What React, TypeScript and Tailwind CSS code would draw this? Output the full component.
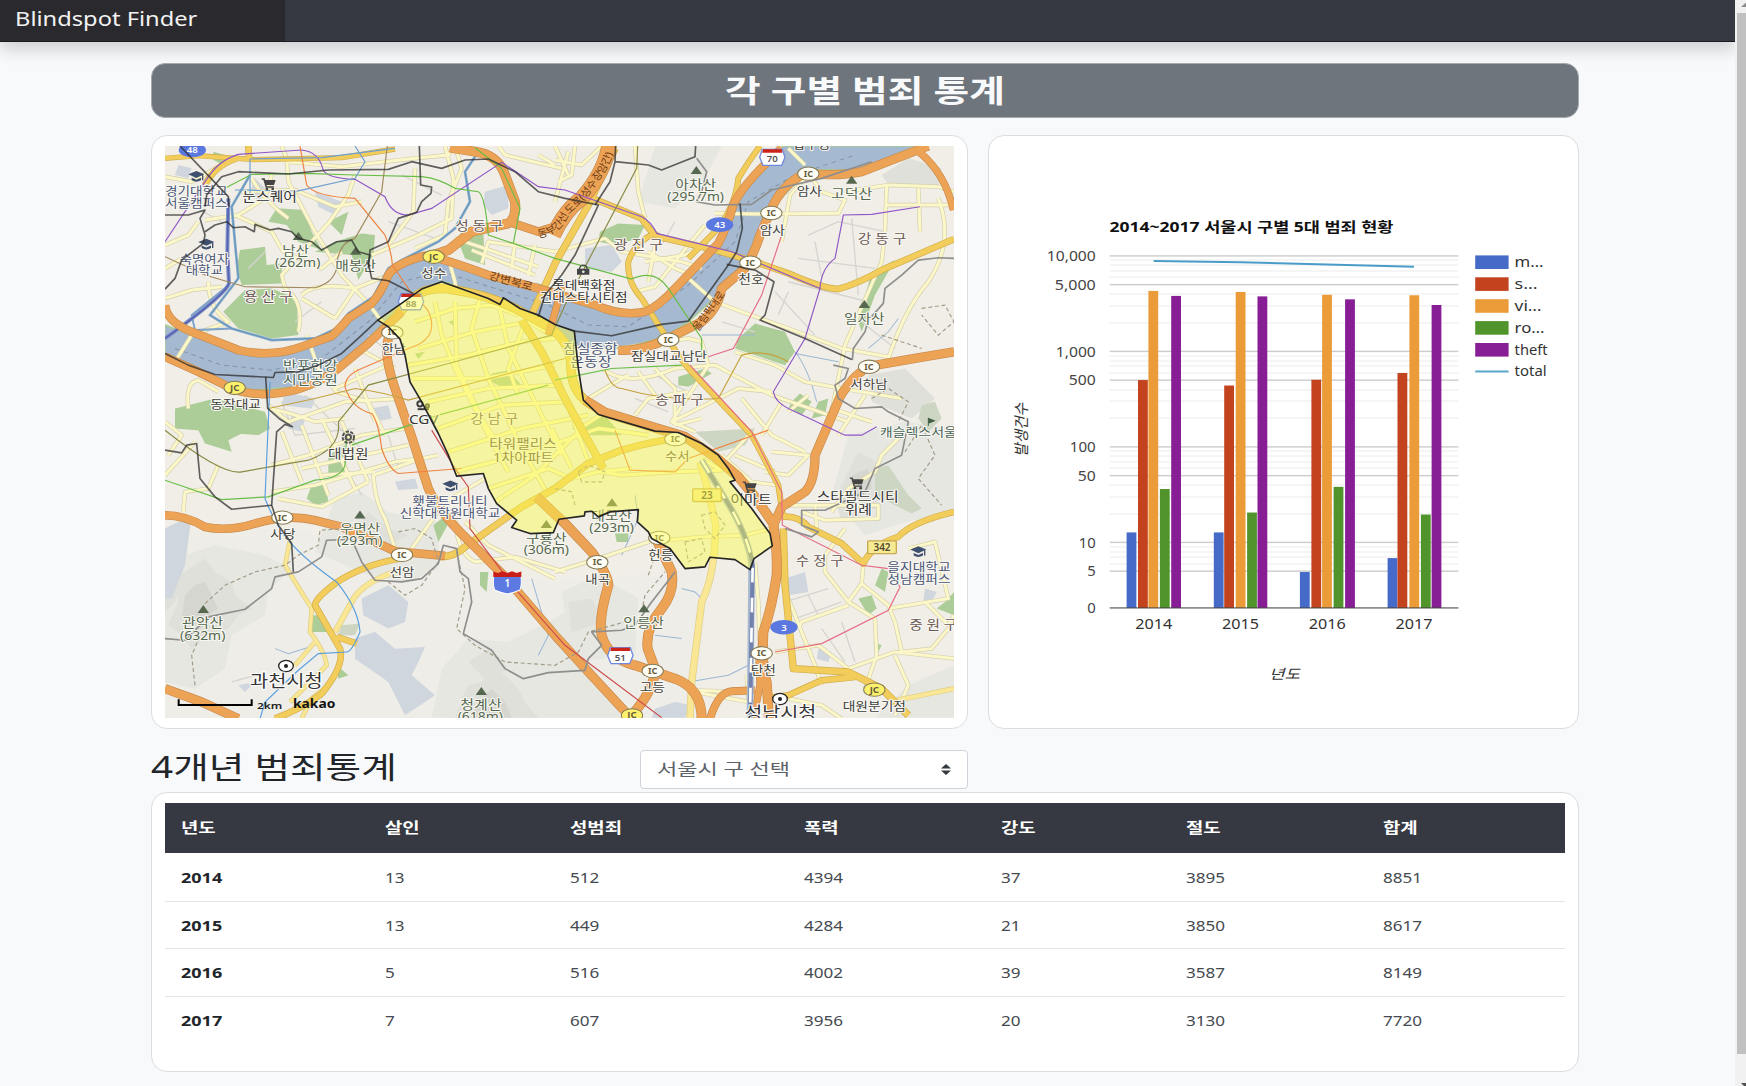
import React from "react";

const FONT = "font-['Noto_Sans','Noto_Sans_CJK_KR',sans-serif]";

type Pts = string;

const ORANGE: [Pts, number][] = [
  ["M30 510 Q35 560 110 590 L250 645 Q350 668 440 635 L530 603 Q560 575 580 550 L650 505 Q680 470 700 420 Q720 385 810 362 Q850 365 1000 420 L1150 460 L1320 510 Q1400 545 1470 530 Q1510 515 1560 460 L1690 325 Q1715 280 1735 210 Q1760 150 1880 40", 22],
  ["M30 665 L130 710 L240 765 Q330 790 430 762 Q500 740 550 700 L640 625 L740 530", 22],
  ["M1390 645 Q1450 650 1530 615 L1640 560 Q1690 520 1700 460 L1770 400 Q1800 350 1815 300 L1850 220 Q1880 150 1950 115 Q2050 125 2120 110 L2280 48 L2320 33", 24],
  ["M1290 795 L1350 832 L1500 878 L1590 905 L1680 965 L1750 1025 L1800 1085 L1855 1165 Q1868 1250 1865 1320 Q1850 1420 1825 1490 Q1820 1600 1835 1640 L1842 1750", 26],
  ["M1812 1560 L1815 1650 L1795 1750", 18],
  ["M700 610 Q685 660 720 760 L770 905 L820 1060 Q850 1130 950 1225 L1050 1325 L1200 1500 L1300 1610 L1430 1750", 24],
  ["M30 1140 Q90 1140 150 1175 Q220 1190 300 1165 Q400 1135 480 1155 L560 1175 L650 1215 L720 1248 L870 1262", 22],
  ["M885 38 L960 50 Q1030 60 1050 120 L1080 200 Q1085 250 1060 265 L950 290 L880 345 L820 365", 26],
  ["M1075 265 L1150 290 L1215 270", 22],
  ["M1195 300 Q1230 225 1280 190 Q1350 110 1362 30", 42],
  ["M2397 650 L2280 670 L2150 692 Q2100 710 2055 785 L2010 890 L1980 960 Q1980 1040 1950 1070 L1880 1115 L1855 1170", 24],
  ["M1145 1085 L1230 1165 L1310 1250 Q1360 1320 1360 1350 Q1330 1450 1340 1500 Q1360 1570 1440 1590 L1560 1630 Q1640 1660 1640 1750", 26],
  ["M1505 1215 L1550 1310 Q1560 1370 1520 1420 Q1470 1480 1478 1540 L1500 1600 Q1500 1660 1430 1740", 26],
  ["M1665 1750 Q1690 1670 1730 1668 L1800 1665", 20],
  ["M2285 45 Q2370 110 2395 225", 18],
  ["M30 1660 L140 1700 L250 1750", 24],
  ["M1180 600 L1215 480 L1225 440", 18],
];

const GOLD: [Pts, number][] = [
  ["M725 540 L780 485 Q820 450 900 465 Q1000 480 1080 520 L1180 575 Q1250 620 1248 700 Q1250 780 1320 815", 24],
  ["M1300 185 L1460 250 Q1485 290 1510 305 L1680 345 L1800 380 L1900 415 Q2000 460 2050 462 Q2110 445 2180 405 L2397 312", 16],
  ["M1130 540 L1200 385 L1300 210 L1380 40", 18],
  ["M1500 295 Q1440 320 1420 380 Q1415 440 1460 490 Q1560 650 1600 700 L1790 900 L1870 1050 L1885 1150", 14],
  ["M1880 1145 Q1930 1140 1960 1175 L2060 1225 L2125 1285 Q2150 1230 2230 1205 Q2270 1160 2397 1130", 16],
  ["M1885 1180 L1890 1350 L1915 1600 L2080 1610 L2180 1660 L2260 1740", 18],
  ["M1830 1690 L1900 1680 L2000 1635 L2100 1625", 16],
  ["M735 1270 Q620 1290 540 1345 Q480 1390 480 1410 L555 1540 Q570 1590 500 1675 Q450 1715 360 1750 M545 1505 L605 1525", 16],
  ["M855 1265 Q900 1265 930 1235 L1100 1115 L1200 1060 L1300 985 L1400 945 Q1500 915 1600 905", 18],
  ["M30 70 L130 62 L300 74 L560 68 L720 42", 12],
  ["M150 150 Q180 90 250 68 M280 33 L282 70", 16],
  ["M1100 555 L1160 650 L1230 790 L1290 900 L1345 1000", 20],
  ["M1815 33 Q1780 80 1750 130 Q1740 220 1680 290 L1600 370", 14],
];

const LIGHT: [Pts, number][] = [
  ["M735 1305 Q620 1340 590 1400 L540 1490", 14],
  ["M1635 980 Q1665 1080 1682 1170 Q1680 1320 1640 1400 L1610 1640 L1605 1750", 18],
  ["M2200 1700 L2397 1660", 12],
  ["M405 1215 L390 1290 Q420 1340 470 1420 L465 1490 Q510 1550 515 1590 L405 1700 M480 1520 L420 1590 M520 1650 L470 1690 L440 1750", 10],
];

const PALE: Pts[] = [
  "M380 33 L395 70 L400 140 L480 290 L560 420 L640 505 L710 600",
  "M395 80 L560 95 L780 70 L880 60 L900 33",
  "M290 130 Q330 200 400 250 M350 120 L330 190 L250 240 L150 255",
  "M260 170 L420 165 L540 215 L620 200",
  "M600 120 L580 180 L520 265 L460 330 L380 420 L390 460",
  "M240 240 L350 290 L385 350 L500 400 L560 350",
  "M30 125 L110 140 L200 90 M30 330 L100 300 L130 260",
  "M30 490 L110 465 L200 455 M30 400 L80 370",
  "M160 440 Q160 520 220 560 L110 600 L60 680",
  "M390 460 Q450 500 430 590 M440 490 L540 550 M600 460 L540 550",
  "M440 480 Q480 440 600 460 L700 420",
  "M455 600 L490 700 L545 770 L640 800 L690 900",
  "M650 360 L790 300 L890 250 L895 130 L870 33",
  "M780 100 L775 230 L700 330",
  "M880 370 L900 440 L905 480 M980 385 L1000 320 L1200 350",
  "M1080 320 L1070 400 M1140 330 L1120 420 M900 310 L1150 395 M950 345 L1140 420",
  "M1030 33 L1050 60 L1220 100 M1150 60 L1200 90 M1200 33 L1240 120",
  "M900 33 L920 100 L880 200 L870 300 L780 340",
  "M1200 75 L1280 90 L1340 33 M1210 140 L1250 120 L1260 33",
  "M1240 50 L1200 200 M1440 33 L1450 170 L1470 250",
  "M1200 350 L1350 310 L1400 350 L1580 380 L1640 400",
  "M1480 350 L1560 400 L1610 420 M1470 380 L1590 360 L1660 320",
  "M1440 470 L1500 455 L1600 330 L1650 270 M1500 330 L1480 440",
  "M1600 430 L1680 500 L1760 530 L1900 580 L2060 640 L2200 665",
  "M1680 235 L1800 237 L2050 235 L2070 195 L2000 170 L1960 115",
  "M1900 40 L1950 90 M1880 320 L1905 180 L1950 130",
  "M2070 170 L2200 150 L2350 155 L2397 170",
  "M2195 150 L2190 290 L2180 380 L2070 630 L2020 880",
  "M2290 160 L2295 290 M2350 190 Q2400 320 2320 440 Q2250 520 2200 670",
  "M2190 210 L2380 210",
  "M1390 640 L1600 610 L1640 620 L1660 690 L1550 860 L1620 890",
  "M1340 700 Q1420 760 1560 700 L1680 690 L1850 780 L2080 860",
  "M1300 790 L1400 730 L1420 720 M1440 840 L1480 790 L1600 770",
  "M1450 710 L1500 780 M1500 700 L1560 760 L1560 870",
  "M1740 650 L1860 690 L1950 740 L2060 760 L2240 790",
  "M1550 860 L1750 760 L1850 770 M1640 850 L1560 870",
  "M1760 790 L1850 900 L1950 950 M1820 900 L1880 800 M1900 830 L1960 780",
  "M1850 950 L1960 960 L1900 1020 L1830 1010 M1690 1000 L1790 890",
  "M1700 960 L1790 1040 L1870 1050 M1740 960 L1860 1010",
  "M2060 770 L2030 820 L2150 860 M2130 780 L2050 900",
  "M2240 900 L2180 960 L2160 1010 L2080 1060 L2030 1130",
  "M1900 1110 L2170 1110 L2170 1150 L2010 1155 L1940 1130 M1980 1110 L1985 1180",
  "M2070 1180 L2010 1260 L2010 1310 L2080 1400 L2160 1450 L2165 1560 L2130 1660",
  "M2080 1410 L1940 1460 L1930 1480 M1900 1390 L1980 1590 L2000 1650",
  "M2125 1290 L2120 1345 L2080 1400 M2120 1345 L2200 1410 L2220 1460",
  "M2200 1420 L2380 1390 L2340 1220 L2260 1240 M2310 1400 L2380 1470 L2397 1440",
  "M2220 1460 L2240 1550 L2330 1540 L2380 1480 M2220 1560 L2260 1650 L2220 1740",
  "M1860 1550 L1990 1530 L2080 1600 L2220 1550 L2397 1570",
  "M1900 1690 L2000 1710 L2060 1750",
  "M1200 1310 L1330 1270 L1480 1220 L1640 1205 L1770 1200 L1850 1180",
  "M1800 1280 L1810 1400 L1815 1560 M1775 1620 L1780 1700 L1620 1670",
  "M1620 1665 L1750 1670",
  "M190 990 L160 1060 L90 1070 L85 1130",
  "M30 860 L80 900 L40 960 M30 1020 L120 920",
  "M340 810 L400 860 L570 800 L740 790",
  "M340 820 Q400 830 480 860 L570 850",
  "M380 890 L440 1040 M440 870 L520 1080 M500 850 L600 1060 M560 860 L640 1040",
  "M350 990 L460 960 L620 900 L750 880 M350 1070 L480 1050 L720 980 L800 970",
  "M100 820 Q90 740 130 735 L190 770",
  "M655 1020 Q660 1100 690 1150 L720 1240 M655 1020 L800 970 L850 960",
  "M500 1020 L660 1010 M440 1000 L760 930",
  "M370 1090 L500 1115 L640 1040",
  "M770 1240 L870 1100 L990 1030 M900 1130 Q900 1250 960 1280 L1080 1265 L1230 1310",
  "M930 1160 L1000 1230 L1200 1330",
  "M610 640 L720 700 M540 760 L700 690 M600 700 L660 860",
];

const DISTRICT_ROADS: Pts[] = [
  "M780 560 L900 520 L1010 510 L1090 540",
  "M790 640 L960 590 L1120 560 L1190 600",
  "M760 690 L940 660 L1100 620 L1200 610",
  "M770 730 L990 730 L1200 690",
  "M820 800 L1000 760 L1210 750",
  "M850 880 L1040 810 L1230 800",
  "M880 950 L1100 880 L1300 840",
  "M900 1010 L1130 950 L1330 880 L1480 900",
  "M840 500 L860 600 L900 700 L950 800 L1010 920 L1060 1010",
  "M900 500 L905 690 L980 850 L1050 960",
  "M975 490 L950 580 L1000 730 L1100 940 L1180 1080",
  "M1030 500 L1060 640 L1140 800 L1220 960",
  "M1110 560 L1060 700 L1090 780",
  "M1000 1060 L1180 1000 L1250 1030 L1330 1010 L1430 1000",
  "M1020 1100 L1140 1020 L1290 870 L1350 830",
  "M1190 880 L1250 1000 M1210 730 L1300 980",
  "M1560 1010 L1700 1005 L1640 970 M1340 1010 L1400 1020 L1560 1010",
];

const MINOR: Pts[] = [
  "M1960 300 L2050 260 L2190 290 M1930 370 L2160 400 M1900 440 L2140 500 M2090 250 L2110 480 M1980 320 L2000 430 M1870 540 L1900 470",
  "M1890 1400 L2020 1360 M1920 1450 L2060 1400 M1960 1380 L1990 1440 M2000 1480 L2070 1580 M2060 1460 L2100 1580",
  "M1700 560 L1800 590 M1520 330 L1560 260 M90 200 L200 260 M420 560 L500 500",
  "M280 400 L330 350 M640 600 L700 650 M560 980 L620 1080 M700 900 L730 1000 M230 1640 L300 1620",
  "M380 800 L420 900 L600 880 M450 780 L640 960 M1440 790 L1540 830 M1500 720 L1640 790",
  "M2120 560 L2220 640 M1860 470 L1980 600 M740 120 L860 180 M700 260 L840 310",
];

const PARKS: Pts[] = [
  "M255 345 L330 335 L335 390 L380 385 L380 445 L260 450 L245 400 Z",
  "M205 530 L270 465 L350 460 L425 490 L430 600 L350 610 L250 580 Z",
  "M365 220 L450 225 L470 290 L500 345 L430 320 L395 270 L340 260 Z",
  "M480 350 L540 320 L620 295 L660 300 L655 360 L610 435 L590 360 Z",
  "M520 260 L580 230 L560 300 Z",
  "M920 285 L985 290 L990 390 L930 370 L910 320 Z",
  "M1335 290 L1390 265 L1470 270 L1450 310 L1380 330 L1330 320 Z",
  "M1750 610 L1800 565 L1890 590 L1920 650 L1890 690 L1740 640 Z",
  "M2110 560 L2150 410 L2220 375 L2160 480 L2120 590 Z",
  "M60 820 L180 790 L330 830 L345 880 L310 900 L60 880 Z M130 885 L280 885 L220 915 L230 950 L150 925 Z",
  "M470 1050 L510 1040 L520 1100 L480 1110 L455 1090 Z",
  "M520 960 L570 930 L575 1010 L520 1020 Z",
  "M1010 715 L1060 705 L1100 750 L1050 760 L1000 735 Z",
  "M1570 725 L1650 700 L1670 715 L1600 755 L1570 750 Z",
  "M1910 800 L1935 775 L1970 800 L1940 840 L1900 820 Z M1990 800 L2020 790 L2010 840 L1970 850 Z",
  "M2110 1390 L2150 1380 L2165 1420 L2140 1440 Z M2160 1350 L2180 1300 L2200 1310 L2190 1370 Z M2370 1400 L2397 1370 L2397 1440 L2345 1420 Z M2155 1520 L2180 1530 L2165 1560 Z",
  "M50 625 L110 635 L125 655 L60 645 Z M1140 440 L1200 480 L1210 470 Z",
  "M975 1310 L1000 1310 L995 1370 L975 1350 Z M545 1590 L580 1620 L550 1630 Z M470 1440 L500 1440 L520 1490 L470 1490 Z",
  "M835 1170 L860 1150 L880 1165 L850 1220 Z M175 50 L210 60 L215 95 L175 75 Z",
  "M1380 1195 L1420 1195 L1420 1220 L1385 1220 Z M1250 880 L1350 840 L1400 900 L1300 900 Z M880 560 L910 550 L900 575 Z M780 655 L810 650 L790 672 Z",
];

const MOUNTAINS: Pts[] = [
  "M30 1300 L90 1260 L180 1230 L330 1260 L410 1300 L340 1370 L330 1440 L230 1500 L210 1600 L120 1660 L30 1640 Z",
  "M540 1090 L620 1070 L700 1130 L850 1160 L850 1300 L760 1340 L640 1320 L480 1250 Z",
  "M830 1747 L860 1600 L940 1510 L1060 1520 L1180 1460 L1300 1390 L1340 1440 L1290 1560 L1400 1747 Z",
  "M1500 33 L1700 33 L1650 130 L1560 220 L1450 200 Z",
  "M2030 1080 L2080 900 L2250 860 L2397 880 L2397 1130 L2250 1160 L2130 1200 Z",
  "M2160 1747 L2260 1650 L2397 1590 L2397 1747 Z",
  "M1220 1370 L1330 1320 L1450 1390 L1440 1560 L1250 1580 Z",
];

const HILLS: Pts[] = [
  "M60 1330 L150 1270 L180 1310 L230 1340 L240 1380 L290 1420 L250 1440 L220 1480 L160 1500 L110 1540 L80 1500 L40 1470 L70 1400 Z",
  "M30 1340 L80 1320 L60 1400 L30 1430 Z",
  "M900 1747 L920 1690 L940 1650 L980 1640 L1010 1600 L1050 1620 L1090 1660 L1110 1700 L1150 1747 Z",
  "M940 1580 L1000 1540 L1060 1600 L1000 1640 Z",
  "M640 1130 L700 1180 L760 1200 L700 1230 L600 1190 Z",
  "M2180 120 L2260 70 L2360 100 L2350 160 L2200 150 Z",
  "M2110 950 L2200 1000 L2160 1120 L2060 1160 L2040 1090 Z",
  "M2140 720 L2250 700 L2340 790 L2270 850 L2150 800 Z",
  "M1240 1400 L1310 1390 L1350 1460 L1250 1490 Z",
];

const RIDGES: Pts[] = [
  "M90 1380 L120 1350 L150 1340 L170 1380 L190 1420 L160 1440 L140 1480 L110 1460 L80 1450 Z",
  "M950 1747 L970 1700 L1010 1660 L1050 1700 L1070 1747 Z",
  "M2090 1020 L2140 1000 L2150 1060 L2090 1110 Z",
];

const PALEBLUE: Pts[] = [
  "M620 1390 L700 1350 L760 1400 L750 1460 L700 1480 L625 1440 Z",
  "M600 1510 L660 1490 L720 1540 L810 1535 L790 1580 L770 1620 L840 1680 L750 1740 L700 1640 L600 1570 Z",
  "M30 1180 L110 1140 L90 1290 L50 1390 L30 1390 Z",
  "M990 170 L1060 150 L1060 220 L1010 240 L985 210 Z",
  "M1290 340 L1370 330 L1400 380 L1370 410 L1290 400 Z",
  "M1500 1720 L1560 1700 L1610 1710 L1590 1747 L1490 1747 Z",
  "M1890 1330 L1950 1310 L1960 1370 L1900 1380 Z M2310 1360 L2345 1370 L2330 1400 L2305 1395 Z M1990 1540 L2030 1550 L2020 1580 L1985 1570 Z",
  "M720 1040 L780 1030 L790 1060 L730 1065 Z M410 840 L450 850 L440 890 L400 880 Z M650 820 L700 810 L710 850 L660 860 Z",
  "M480 170 L560 200 L540 240 L490 215 Z M70 90 L110 100 L100 130 L60 120 Z M300 130 L330 160 L310 200 L285 170 Z",
  "M390 770 L480 790 L470 820 L380 810 Z M250 1650 L300 1640 L270 1670 Z",
];

const BORDERS: Pts[] = [
  "M75 33 L220 185 L222 215 M30 240 L100 240 L150 225 L135 250 L150 300 L145 325 L80 375 L60 430 L30 462",
  "M150 290 L180 270 L215 260 L235 278 L270 275 L298 290 L300 268 L345 285 L370 280 L410 290 L430 310 L470 320 L500 345 L545 320 L590 315 L610 350 L645 360 L640 385 L650 430 L700 437 L775 475",
  "M150 215 L155 180 L200 125 L250 110 L400 117 L520 105 L700 103 L770 80 L860 100 L930 75 L1000 72 L1080 110 L1150 170 L1230 190 L1330 210 L1260 360 L1220 420 L1170 480 L1150 545",
  "M793 33 L797 150 L830 156 L828 175 L800 200 L785 232 L730 250 L700 320 L645 345 L640 400",
  "M30 655 L100 690 L180 718 L355 727 L360 712 L430 710 L490 690 L560 655 L620 600 L668 555",
  "M332 725 L338 820 L372 850 L412 875 L390 868 L365 890 L350 1110 L370 1170 L410 1225 L415 1310",
  "M30 945 L80 953 L95 930 L125 925 L135 1030 L180 1085 L230 1122 L350 1110",
  "M1382 33 L1380 80 L1480 90 L1520 105 L1620 65 L1622 33 M1380 80 L1365 140 L1320 210",
  "M1755 205 L1762 280 L1745 350 L1720 390 L1600 558 L1520 568 L1370 602 L1258 588",
  "M1715 388 L1800 405 L1857 440 L1830 540 L1815 555 L1950 610 L2090 673",
];

const GREY_BORDERS: Pts[] = [
  "M2092 675 L2095 640 L2130 590 L2140 555 L2185 505 L2190 460 L2240 420 L2290 375 L2350 368 L2397 370",
  "M2035 690 L2080 700 L2070 730 L2040 750 L2050 790 L2100 820 L2180 815 L2200 830 L2260 860 L2240 960 L2160 1000 L2130 1070 L2010 1125 L1940 1125 L1940 1170 L1990 1190 L1970 1205 L1890 1180",
  "M30 1510 L90 1515 L160 1445 L270 1422 L350 1360 L360 1325 L430 1310 L500 1265 L515 1215 L590 1212 L620 1280 L660 1335 L740 1340 L800 1330 L850 1285 L865 1230 L905 1240 L915 1310 L940 1330 L950 1400 L925 1495 L1010 1545 L1050 1600 L1105 1630 L1180 1612 L1290 1605 L1300 1570 L1340 1530 L1310 1490 L1400 1485 L1440 1470 L1490 1400 L1560 1310",
  "M1625 70 L1655 110 L1640 170 L1625 200 L1680 210 L1790 208 L1850 165 L2000 130 L2150 80",
];

const DASHED: Pts[] = [
  "M150 1405 L210 1350 L300 1310 L390 1290 L430 1260 L490 1230 L495 1185 L560 1180",
  "M120 1650 L110 1560 L140 1490 M905 1250 L930 1360 L905 1480 L960 1530 L1050 1580 L1200 1590 L1270 1550 L1300 1490 L1410 1460",
  "M1480 1320 L1500 1260 M1460 1430 L1470 1380 L1530 1310 M730 1190 L780 1180 L830 1210 L850 1280 L800 1350 L750 1380 L700 1340",
  "M1270 1010 L1300 990 L1350 1010 L1340 1040 L1280 1040 Z M1640 1140 L1680 1130 L1710 1170 L1680 1210 L1650 1180 Z M1590 1220 L1640 1210 L1650 1250 L1600 1280 Z",
  "M2180 600 L2300 640 M2300 520 L2370 510 L2397 560 L2350 600 L2300 540",
  "M2250 950 L2300 870 L2340 960 L2290 1030 L2360 1110 M1200 1060 L1250 1070 L1260 1110",
  "M2150 790 L2200 760 L2260 800 L2230 860",
];

const SUBWAY: [Pts, string][] = [
  ["M30 320 L150 140 Q190 75 250 58 L440 45 Q490 50 503 100 Q510 130 600 133 L690 185 Q710 240 760 240 L830 220 L1040 82 L1150 155 L1230 165 L1460 245 Q1490 260 1505 295 L1730 350 L1995 460 Q1999 400 2040 370 L2065 240 L2150 238 L2295 215", "#8f56c8"],
  ["M1995 460 L1950 610 L1855 770 Q1860 800 1900 820 L2070 900 L2120 900 L2165 875", "#8f56c8"],
  ["M200 165 L290 118 L450 115 L600 120 L800 125 Q850 130 900 160 L970 170 Q990 180 1000 300 L1075 325 L1200 370 L1430 432 Q1500 400 1540 460 L1640 610 L1640 660 M1075 325 L1095 220 L1040 100 L960 38", "#68bd46"],
  ["M30 1035 L200 1093 L340 1085 L480 1035 Q560 1030 570 990 L575 900 M590 930 L850 840 L1180 750 M1200 735 L1370 700 L1580 690", "#68bd46"],
  ["M435 33 L455 150 Q480 185 600 190 L690 300 Q710 350 712 390 L780 490 Q830 520 830 570 Q830 620 760 640 L620 700 Q570 720 570 755 Q590 820 650 835 Q670 860 680 940 Q700 1000 730 1015 L920 1000 M1380 885 L1425 1005 L1560 1010 L1600 970 L1840 885", "#ee8240"],
  ["M340 820 L480 790 L600 760 Q680 770 760 795 L1230 670 M1350 705 Q1370 760 1400 760 Q1540 800 1690 790 L1760 660 Q1830 640 1900 680", "#c4a13e"],
  ["M30 365 L150 420 L270 455 L480 458 Q550 440 548 370 Q560 320 600 310 L680 170 L697 33", "#a08a5e"],
  ["M30 885 Q200 1020 260 1010 L460 975 Q560 940 550 860 L640 750 L900 680 L1190 600 L1230 510 L1445 100 L1448 33", "#8a8a45"],
  ["M1880 300 L1820 480 L1735 640 L1660 665 M1605 690 L1790 890 L1880 1070 L1882 1170 L2120 1290 L2200 1300 L2235 1355 L2200 1425 L2000 1525 L1860 1550", "#e56d86"],
  ["M830 885 L900 1000 L940 1055 L945 1180 L1080 1360 L1230 1530 L1520 1747", "#cc4b4b"],
  ["M285 180 L285 72 L500 68 L720 40 M420 170 L600 130 L630 80 L600 33 M240 165 L420 168", "#6f9fd0"],
  ["M345 740 L330 1090 Q345 1130 380 1190 Q430 1260 545 1340 Q610 1420 615 1490 Q590 1550 575 1550 L490 1555 L430 1605 L330 1700 L315 1750", "#5a9fe0"],
];

type Label = [string, number, number, number, number, string];
const LABELS: Label[] = [
  ["경기대학교", 124, 183, 188, 37, "#4a5578"],
  ["서울캠퍼스", 124, 220, 188, 37, "#4a5578"],
  ["눈스퀘어", 344, 198, 164, 38, "#333333"],
  ["남산", 422, 360, 80, 38, "#55684f"],
  ["(262m)", 428, 395, 136, 36, "#55684f"],
  ["매봉산", 602, 404, 122, 38, "#55684f"],
  ["숙명여자", 148, 387, 148, 36, "#4a5578"],
  ["대학교", 148, 421, 112, 36, "#4a5578"],
  ["용 산 구", 340, 499, 148, 38, "#6b5754"],
  ["성 동 구", 973, 284, 144, 38, "#6b5754"],
  ["성수", 836, 430, 76, 36, "#40403c"],
  ["한남", 716, 658, 72, 36, "#40403c"],
  ["반포한강", 466, 706, 164, 38, "#4a6458"],
  ["시민공원", 466, 746, 164, 38, "#4a6458"],
  ["동작대교", 242, 822, 152, 36, "#40403c"],
  ["CGV", 806, 866, 88, 38, "#333333"],
  ["강 남 구", 1018, 864, 144, 38, "#6b5754"],
  ["아차산", 1622, 163, 122, 38, "#55684f"],
  ["(295.7m)", 1622, 198, 170, 36, "#55684f"],
  ["광 진 구", 1450, 343, 148, 38, "#6b5754"],
  ["롯데백화점", 1286, 465, 190, 36, "#333333"],
  ["건대스타시티점", 1286, 502, 264, 36, "#333333"],
  ["암사", 1963, 182, 76, 36, "#40403c"],
  ["암사", 1852, 300, 76, 36, "#40403c"],
  ["고덕산", 2090, 190, 124, 38, "#55684f"],
  ["강 동 구", 2181, 324, 146, 38, "#6b5754"],
  ["천호", 1788, 448, 76, 36, "#40403c"],
  ["일자산", 2128, 563, 122, 38, "#55684f"],
  ["잠실종합", 1306, 655, 164, 38, "#4a5578"],
  ["운동장", 1308, 694, 124, 38, "#4a5578"],
  ["잠실대교남단", 1542, 679, 228, 36, "#40403c"],
  ["송 파 구", 1574, 807, 146, 38, "#6b5754"],
  ["서하남", 2142, 761, 112, 36, "#40403c"],
  ["캐슬렉스서울", 2290, 905, 232, 36, "#4a6458"],
  ["대법원", 580, 968, 122, 38, "#40403c"],
  ["타워팰리스", 1104, 938, 202, 38, "#5e4e40"],
  ["1차아파트", 1105, 981, 182, 38, "#5e4e40"],
  ["횃불트리니티", 885, 1113, 226, 36, "#4a5578"],
  ["신학대학원대학교", 885, 1149, 302, 36, "#4a5578"],
  ["사당", 384, 1212, 76, 36, "#40403c"],
  ["우면산", 615, 1193, 122, 38, "#55684f"],
  ["(293m)", 614, 1229, 136, 36, "#55684f"],
  ["선암", 741, 1325, 74, 36, "#40403c"],
  ["관악산", 143, 1476, 124, 38, "#55684f"],
  ["(632m)", 143, 1513, 136, 36, "#55684f"],
  ["구룡산", 1174, 1223, 122, 38, "#55684f"],
  ["(306m)", 1174, 1257, 136, 36, "#55684f"],
  ["대모산", 1370, 1155, 122, 38, "#55684f"],
  ["(293m)", 1370, 1191, 134, 36, "#55684f"],
  ["수서", 1567, 976, 74, 36, "#5e4e40"],
  ["이마트", 1788, 1107, 124, 38, "#333333"],
  ["스타필드시티", 2108, 1096, 246, 38, "#333333"],
  ["위례", 2110, 1137, 82, 38, "#333333"],
  ["헌릉", 1517, 1274, 74, 36, "#40403c"],
  ["내곡", 1328, 1345, 74, 36, "#40403c"],
  ["수 정 구", 1994, 1290, 144, 38, "#6b5754"],
  ["을지대학교", 2292, 1309, 190, 36, "#4a5578"],
  ["성남캠퍼스", 2292, 1345, 190, 36, "#4a5578"],
  ["인릉산", 1466, 1475, 122, 38, "#55684f"],
  ["고등", 1492, 1670, 76, 36, "#40403c"],
  ["중 원 구", 2335, 1482, 144, 38, "#6b5754"],
  ["탄천", 1825, 1619, 76, 36, "#40403c"],
  ["대원분기점", 2158, 1727, 190, 36, "#40403c"],
  ["청계산", 978, 1722, 124, 38, "#55684f"],
  ["(618m)", 976, 1757, 136, 36, "#55684f"],
  ["압구정", 1970, 43, 112, 36, "#40403c"],
];

const PEAKS: [number, number][] = [[430, 304], [602, 348], [1624, 106], [2090, 135], [2128, 508], [615, 1139], [145, 1422], [1174, 1167], [1371, 1102], [1467, 1420], [979, 1668]];
const ICS: [number, number, string][] = [[712, 592, "IC"], [1960, 116, "IC"], [1849, 234, "IC"], [1786, 383, "IC"], [1540, 614, "IC"], [2142, 695, "IC"], [382, 1147, "IC"], [741, 1259, "IC"], [1561, 912, "IC"], [1327, 1281, "IC"], [1513, 1208, "IC"], [1493, 1607, "IC"], [1820, 1554, "IC"], [836, 365, "JC"], [239, 758, "JC"], [2158, 1663, "JC"], [1431, 1740, "JC"]];
const CARTS: [number, number][] = [[342, 145], [1785, 1054], [2106, 1042]];
const CAPS: [number, number][] = [[124, 124], [154, 327], [886, 1052], [2290, 1249]];

const GANGNAM =
  "M668 555 L700 575 L735 612 L750 660 L765 740 L800 800 L850 895 L880 960 L905 1023 L985 1015 L1000 1060 L1025 1105 L1085 1155 L1070 1177 L1095 1185 L1125 1195 L1195 1192 L1212 1152 L1288 1142 L1290 1130 L1310 1128 L1330 1145 L1365 1130 L1450 1123 L1447 1160 L1480 1190 L1490 1210 L1545 1240 L1590 1300 L1650 1295 L1665 1266 L1740 1273 L1785 1303 L1797 1270 L1852 1232 L1845 1195 L1790 1120 L1725 1040 L1740 1035 L1720 1000 L1690 960 L1640 925 L1570 892 L1500 888 L1330 838 L1285 795 L1270 700 L1258 588 L1200 568 L1150 540 L1095 520 L1045 488 L1035 508 L1000 490 L860 440 L800 462 Z";

const RIVER =
  "M30 570 L110 600 L250 645 L350 655 L450 630 L540 600 L600 540 L670 470 L730 400 L800 370 L870 370 L1000 420 L1150 455 L1320 515 L1400 540 L1470 530 L1600 430 L1700 320 L1740 200 L1780 130 L1850 60 L1885 33 L2290 33 L2210 70 L2120 105 L1990 105 L1920 145 L1860 210 L1810 330 L1760 390 L1700 470 L1600 560 L1530 605 L1400 640 L1260 635 L1200 590 L1150 545 L1000 475 L860 440 L780 470 L700 550 L620 630 L540 700 L430 755 L300 765 L200 745 L100 690 L30 655 Z";

function Roads({ list, color, casing }: { list: [Pts, number][]; color: string; casing: string }) {
  return (
    <g fill="none" strokeLinejoin="round">
      {list.map(([d, w], i) => <path key={"c" + i} d={d} stroke={casing} strokeWidth={w + 4} />)}
      {list.map(([d, w], i) => <path key={"f" + i} d={d} stroke={color} strokeWidth={w} />)}
    </g>
  );
}

function Shield({ x, y, n }: { x: number; y: number; n: string }) {
  return (
    <g transform={`translate(${x} ${y})`}>
      <path d="M-30 -24 H30 L38 0 L28 24 H-28 L-38 0 Z" fill="#fff" stroke="#7088e0" strokeWidth="4" />
      <path d="M-28 -24 H28 L30 -14 H-30 Z" fill="#cc2418" />
      <text y="15" fontSize="29" fontWeight="600" textAnchor="middle" fill="#555">{n}</text>
    </g>
  );
}

function RegionMap() {
  return (
    <svg className={`block h-full w-full ${FONT}`} viewBox="30 33 2367 1715" preserveAspectRatio="none" role="img" aria-label="서울시 지도">
      <rect x="30" y="33" width="2367" height="1715" fill="#f1eee7" />
      <path d="M30 1190 L400 1180 L860 1290 L1200 1340 L1640 1300 L1640 1747 L30 1747 Z" fill="#eeede8" />
      {MOUNTAINS.map((d, i) => <path key={i} d={d} fill="#e7e7e2" />)}
      {HILLS.map((d, i) => <path key={i} d={d} fill="#dfe0da" />)}
      {RIDGES.map((d, i) => <path key={i} d={d} fill="#d5d6cf" />)}
      {PALEBLUE.map((d, i) => <path key={i} d={d} fill="#cfd6dd" />)}
      <path d="M2160 1000 L2200 990 L2260 1080 L2300 1120 L2270 1135 L2160 1080 Z M2300 810 L2340 800 L2360 850 L2320 890 L2290 850 Z M1620 890 L1800 880 L1770 930 L1690 950 Z M560 1470 L615 1465 L600 1500 L550 1500 Z" fill="#cdd6c3" />
      {PARKS.map((d, i) => <path key={i} d={d} fill="#accd98" />)}
      <path d={RIVER} fill="#a5b9d0" stroke="#a9cc9b" strokeWidth="5" />
      <path d="M60 640 L200 690 L350 705 L500 670 L640 560 L740 440 L860 410 L1180 510 L1300 570 L1420 575 L1600 450 L1740 320 L1780 200 L1920 120 L2100 60" fill="none" stroke="#8593a0" strokeWidth="3" strokeDasharray="14 12" />
      <g fill="none" stroke="#d5d4cf" strokeWidth="4">{MINOR.map((d, i) => <path key={i} d={d} />)}</g>
      <g fill="none" stroke="#9bb7d4" strokeWidth="3">
        <path d="M1920 650 Q1960 700 1985 800 M1920 655 L2050 680 M1640 600 L1800 600 M2140 640 L2200 590 L2230 550 M1400 1260 L1450 1150 L1440 1080 M1600 1640 L1720 1620 L1780 1590 M360 1540 L400 1555 L480 1530 M1150 1560 L1180 1500 L1130 1330 M1580 1360 L1620 1370 L1640 1390 M1500 1500 L1580 1510" />
      </g>
      <g fill="none" strokeLinejoin="round">
        {PALE.map((d, i) => <path key={"c" + i} d={d} stroke="#d3cfae" strokeWidth="13" />)}
        {PALE.map((d, i) => <path key={"f" + i} d={d} stroke="#fcf7c8" strokeWidth="9" />)}
        {DISTRICT_ROADS.map((d, i) => <path key={"dc" + i} d={d} stroke="#cfcba4" strokeWidth="14" />)}
        {DISTRICT_ROADS.map((d, i) => <path key={"df" + i} d={d} stroke="#fdf7b8" strokeWidth="10" />)}
      </g>
      <path d="M285 120 L230 215 L250 430 L165 540 L230 580 L350 615 L480 610 L545 580 L580 535 L655 485 L700 400 L740 375 L850 320 L900 280 L945 200 L930 110 L970 50" fill="none" stroke="#87abc9" strokeWidth="8" />
      <path d="M215 455 L110 540 L120 585 L230 580" fill="none" stroke="#7ea3c8" strokeWidth="6" />
      <path d="M285 120 L230 215 L250 430 L165 540 L230 580 L350 615 L480 610 L545 580 L580 535 L655 485 L700 400 L740 375 L850 320 L900 280 L945 200 L930 110 L970 50" fill="none" stroke="#4f88b8" strokeWidth="2" />
      <path d="M220 190 L217 350 L222 445 Q210 480 30 610" fill="none" stroke="#7f93c6" strokeWidth="12" />
      <path d="M220 190 L217 350 L222 445 Q210 480 30 610" fill="none" stroke="#5560b4" strokeWidth="5" />
      <Roads list={LIGHT} color="#f9e795" casing="#dfcd83" />
      <Roads list={GOLD} color="#f2cd5b" casing="#d0ac4b" />
      <Roads list={ORANGE} color="#eda355" casing="#c88a4c" />
      <g fill="none" strokeWidth="3.5">{SUBWAY.map(([d, c], i) => <path key={i} d={d} stroke={c} />)}</g>
      <path d="M1640 975 L1710 1090 Q1780 1200 1790 1290 L1785 1750" fill="none" stroke="#a9b9d0" strokeWidth="20" />
      <path d="M1640 975 L1710 1090 Q1780 1200 1793 1290 L1785 1750" fill="none" stroke="#7180ad" strokeWidth="12" />
      <path d="M1640 975 L1710 1090 Q1780 1200 1793 1290 L1785 1750" fill="none" stroke="#fff" strokeWidth="8" strokeDasharray="44 46" />
      <g fill="none" stroke="#a29b86" strokeWidth="3.5" strokeDasharray="12 8">{DASHED.map((d, i) => <path key={i} d={d} />)}</g>
      <g fill="none" stroke="#8e8e8c" strokeWidth="5" strokeLinejoin="round">{GREY_BORDERS.map((d, i) => <path key={i} d={d} />)}</g>

      {CAPS.map(([x, y], i) => (
        <g key={i} transform={`translate(${x} ${y})`} fill="#3f4f6e">
          <path d="M-24 -6 L0 -16 L24 -6 L0 5 Z" />
          <path d="M-14 4 L0 10 L14 4 V12 Q0 20 -14 12 Z M17 -4 H21 V12 H17 Z" />
        </g>
      ))}
      {CARTS.map(([x, y], i) => (
        <g key={i} transform={`translate(${x} ${y})`} fill="#444">
          <path d="M-22 -15 H-13 L-11 -10 H20 L15 5 H-8 L-6 9 H15 V13 H-10 L-17 -11 H-22 Z" />
          <circle cx="-6" cy="17" r="4" /><circle cx="11" cy="17" r="4" />
        </g>
      ))}
      <path d="M1274 402 Q1274 390 1285 390 Q1296 390 1296 402" fill="none" stroke="#444" strokeWidth="4" />
      <path d="M1266 401 H1303 V419 H1266 Z" fill="#444" />
      <circle cx="1285" cy="410" r="4" fill="#eee" />
      <path d="M2320 848 V872 M2320 850 L2338 857 L2320 864 Z" fill="#3f5c45" stroke="#3f5c45" strokeWidth="3" />
      <g fill="none" stroke="#3f3f3f" strokeWidth="6"><circle cx="795" cy="806" r="8" /><circle cx="817" cy="812" r="5" /><path d="M788 822 H822" /></g>
      <g transform="translate(580 906)" fill="none" stroke="#555" strokeWidth="6"><circle r="17" strokeDasharray="10 4" /><circle r="8" /></g>
      {PEAKS.map(([x, y], i) => <path key={i} d={`M${x} ${y - 13} L${x + 17} ${y + 11} H${x - 17} Z`} fill="#56684f" />)}
      {ICS.map(([x, y, t], i) => (
        <g key={i}>
          <ellipse cx={x} cy={y} rx="32" ry="20" fill={t === "JC" ? "#fcf16c" : "#fffef6"} stroke="#857b55" strokeWidth="3" />
          <text x={x} y={y + 9} fontSize="24" fontWeight="700" textAnchor="middle" textLength="28" lengthAdjust="spacingAndGlyphs" fill="#665c3d">{t}</text>
        </g>
      ))}
      <Shield x={1852} y={67} n="70" />
      <Shield x={1396} y={1561} n="51" />
      <Shield x={768} y={500} n="88" />
      {([["48", 112, 45], ["43", 1694, 269], ["3", 1887, 1476]] as [string, number, number][]).map(([n, x, y]) => (
        <g key={n}>
          <ellipse cx={x} cy={y} rx="41" ry="22" fill="#5a78e0" />
          <text x={x} y={y + 10} fontSize="29" fontWeight="600" textAnchor="middle" fill="#fff">{n}</text>
        </g>
      ))}
      <g transform="translate(1057 1340)">
        <path d="M-41 -17 H41 Q44 10 38 24 Q20 32 0 36 Q-20 32 -38 24 Q-44 10 -41 -17 Z" fill="#5d7ae2" stroke="#fff" strokeWidth="3" />
        <path d="M-42 -31 L-28 -27 L-14 -32 L0 -27 L14 -32 L28 -27 L42 -31 V-15 H-42 Z" fill="#c91d1a" />
        <text y="15" fontSize="30" fontWeight="600" textAnchor="middle" fill="#fff">1</text>
      </g>
      {([["23", 1656, 1080], ["342", 2181, 1236]] as [string, number, number][]).map(([n, x, y]) => (
        <g key={n}>
          <rect x={x - 43} y={y - 19} width="86" height="38" rx="3" fill="#f6ea92" stroke="#c6a951" strokeWidth="4" />
          <text x={x} y={y + 11} fontSize="30" fontWeight="600" textAnchor="middle" fill="#544a33">{n}</text>
        </g>
      ))}
      <g stroke="#f8f7f2" strokeWidth="6" strokeLinejoin="round">
        {LABELS.map(([t, x, y, w, s, c], i) => (
          <text key={i} x={x} y={y} fontSize={s} textAnchor="middle" textLength={w} lengthAdjust="spacingAndGlyphs" fill={c} className="[paint-order:stroke]">{t}</text>
        ))}
      </g>
      <g fill="#6d3c17" fontSize="32">
        <text transform="translate(1000 432) rotate(15)" textLength="134" lengthAdjust="spacingAndGlyphs">강변북로</text>
        <text transform="translate(1630 590) rotate(-54)" textLength="138" lengthAdjust="spacingAndGlyphs">올림픽대로</text>
        <path id="arterial" d="M1150 308 Q1215 300 1240 240 Q1300 190 1335 130 Q1362 100 1378 40" fill="none" />
        <text><textPath href="#arterial" textLength="350" lengthAdjust="spacingAndGlyphs">동부간선도로(성수장암간)</textPath></text>
      </g>
      {([[393, 1592], [1875, 1691]] as [number, number][]).map(([x, y], i) => (
        <g key={i}><ellipse cx={x} cy={y} rx="22" ry="17" fill="#fff" stroke="#222" strokeWidth="4" /><circle cx={x} cy={y} r="6" fill="#222" /></g>
      ))}
      <g fill="#333" fontSize="50" textAnchor="middle" stroke="#fff" strokeWidth="6" className="[paint-order:stroke]">
        <text x="394" y="1655" textLength="218" lengthAdjust="spacingAndGlyphs">과천시청</text>
        <text x="1876" y="1752" textLength="216" lengthAdjust="spacingAndGlyphs">성남시청</text>
      </g>
      <path d={GANGNAM} fill="#fbfa4b" fillOpacity="0.45" stroke="#262626" strokeWidth="5" strokeLinejoin="round" />
      <g fill="none" stroke="#2d2d2d" strokeOpacity="0.75" strokeWidth="5" strokeLinejoin="round">{BORDERS.map((d, i) => <path key={i} d={d} />)}</g>
      <path d="M71 1692 V1709 H290 V1692" fill="none" stroke="#000" strokeWidth="6" />
      <text x="306" y="1720" fontSize="28" fontWeight="600" textLength="76" lengthAdjust="spacingAndGlyphs" fill="#222">2km</text>
      <text x="414" y="1718" fontSize="37" fontWeight="700" textLength="127" lengthAdjust="spacingAndGlyphs" fill="#111">kakao</text>
    </svg>
  );
}

const YEARS = ["2014", "2015", "2016", "2017"];
const DATA = [
  [13, 512, 4394, 37, 3895, 8851],
  [13, 449, 4284, 21, 3850, 8617],
  [5, 516, 4002, 39, 3587, 8149],
  [7, 607, 3956, 20, 3130, 7720],
];
const COLORS = ["#466ac8", "#c4431f", "#eb9c38", "#50942b", "#871e95"];
const BAR_X = [
  [1126.6, 1138, 1148.4, 1159.9, 1171.2],
  [1213.8, 1224.2, 1235.7, 1247.1, 1257.5],
  [1299.9, 1311.4, 1322.1, 1333.6, 1345.1],
  [1387.6, 1397.5, 1409.4, 1420.9, 1431.6],
];
const yOf = (v: number) => 542.5 - 95.5 * Math.log10(v / 10);
const TICKS: [string, number, number][] = [
  ["10,000", 10000, 49], ["5,000", 5000, 41], ["1,000", 1000, 40], ["500", 500, 27], ["100", 100, 26], ["50", 50, 18], ["10", 10, 17], ["5", 5, 8.5],
];
const LEGEND: [string, number][] = [["m…", 29], ["s…", 23], ["vi…", 27], ["ro…", 30], ["theft", 33]];

function CrimeChart() {
  const minor: number[] = [];
  [1, 10, 100, 1000].forEach((d) => [2, 3, 4, 6, 7, 8, 9].forEach((m) => { if (m * d > 5) minor.push(m * d); }));
  const cx = [1153.7, 1240.6, 1327.2, 1414];
  return (
    <svg className={`block h-full w-full ${FONT}`} viewBox="989 137 589 590" role="img" aria-label="범죄 현황 차트">
      <text x="1109.5" y="231.5" fontSize="14" fontWeight="700" textLength="284" lengthAdjust="spacingAndGlyphs" fill="#111">2014~2017 서울시 구별 5대 범죄 현황</text>
      {minor.map((v) => <rect key={v} x="1109.7" y={Math.round(yOf(v)) - 0.5} width="348.7" height="1" fill="#ebebeb" />)}
      {TICKS.map(([t, v, w]) => (
        <g key={t}>
          <rect x="1109.7" y={yOf(v) - 0.8} width="348.7" height="1.4" fill="#cccccc" />
          <text x="1095.8" y={yOf(v) + 5.2} fontSize="14.5" textAnchor="end" textLength={w} lengthAdjust="spacingAndGlyphs" fill="#444">{t}</text>
        </g>
      ))}
      <text x="1095.8" y="612.8" fontSize="14.5" textAnchor="end" textLength="8.5" lengthAdjust="spacingAndGlyphs" fill="#444">0</text>
      {DATA.map((row, g) => row.slice(0, 5).map((v, i) => {
        const top = yOf(v) + 0.8;
        return <rect key={`${g}-${i}`} x={BAR_X[g][i]} y={top} width="9.8" height={608 - top} fill={COLORS[i]} />;
      }))}
      <rect x="1109.7" y="607.2" width="348.7" height="1.4" fill="#444" fillOpacity="0.75" />
      <polyline points={DATA.map((r, i) => `${cx[i]},${yOf(r[5])}`).join(" ")} fill="none" stroke="#4a9cc8" strokeWidth="2" />
      {YEARS.map((y, i) => <text key={y} x={cx[i]} y="628.5" fontSize="14.5" textAnchor="middle" textLength="37" lengthAdjust="spacingAndGlyphs" fill="#333">{y}</text>)}
      {LEGEND.map(([t, w], i) => (
        <g key={t}>
          <rect x="1475.2" y={255.4 + i * 21.9} width="33.4" height="13.6" fill={COLORS[i]} />
          <text x="1514.6" y={267 + i * 21.9} fontSize="14" textLength={w} lengthAdjust="spacingAndGlyphs" fill="#333">{t}</text>
        </g>
      ))}
      <path d="M1475.2 371.5 H1508.6" stroke="#5ba6cd" strokeWidth="2.2" />
      <text x="1514.6" y="376" fontSize="14" textLength="32" lengthAdjust="spacingAndGlyphs" fill="#333">total</text>
      <text transform="translate(1027 457) rotate(-90)" fontSize="15.5" fontStyle="italic" textLength="54" lengthAdjust="spacingAndGlyphs" fill="#333">발생건수</text>
      <text x="1269" y="678.5" fontSize="13.5" fontStyle="italic" textLength="31" lengthAdjust="spacingAndGlyphs" fill="#333">년도</text>
    </svg>
  );
}

const HEADERS = ["년도", "살인", "성범죄", "폭력", "강도", "절도", "합계"];
const COLS = "grid grid-cols-[203.5px_185px_234.5px_196.5px_185px_197px_1fr]";

export default function App() {
  return (
    <div className={`flex h-[1086px] w-[1746px] overflow-hidden bg-[#f8f9fb] text-[#212529] ${FONT}`}>
      <div className="flex w-[1735px] flex-col">
        <header className="flex h-[42px] shrink-0 border-b border-[#1b1c22] bg-[#363941] shadow-[0_8px_16px_rgba(0,0,0,0.16)]">
          <div className="flex w-[285px] items-center border-r border-[#26272c] bg-[#2a2a2e] pb-[2px] pl-[15px] text-[19px] text-[#f2f2f2]">
            <span className="origin-left scale-x-[1.245] whitespace-nowrap">Blindspot Finder</span>
          </div>
        </header>
        <main className="ml-[151px] flex w-[1428px] flex-col">
          <h1 className="mt-[21px] flex h-[55px] items-center justify-center rounded-[14px] border border-[#a4a9ae] bg-[#6e757c] text-[31px] font-bold text-[#f8f9fa]">
            <span className="scale-x-[1.25] whitespace-nowrap">각 구별 범죄 통계</span>
          </h1>
          <div className="mt-[17px] flex h-[594px] gap-5">
            <section className="w-[817px] rounded-[16px] border border-[#dcdde0] bg-white py-[10px] pl-[13px] pr-[13px]">
              <RegionMap />
            </section>
            <section className="w-[591px] rounded-[16px] border border-[#dcdde0] bg-white">
              <CrimeChart />
            </section>
          </div>
          <div className="flex h-[63px] w-[817px] justify-between">
            <h2 className="flex h-[76px] items-center text-[30px] leading-none">
              <span className="origin-left scale-x-[1.29] whitespace-nowrap">4개년 범죄통계</span>
            </h2>
            <button className="mt-[21px] flex h-[39px] w-[328px] items-center justify-between rounded-[4px] border border-[#ced4da] bg-white pl-4 pr-[16px] text-[15.5px] text-[#5b6269]">
              <span className="origin-left scale-x-[1.42] whitespace-nowrap">서울시 구 선택</span>
              <svg width="10" height="11" viewBox="0 0 10 11"><path d="M5 0 L10 4.5 H0 Z M0 6.5 H10 L5 11 Z" fill="#343a40" /></svg>
            </button>
          </div>
          <section className="h-[279.5px] rounded-[16px] border border-[#dcdde0] bg-white px-[13px] pt-[10px]">
            <div className={`${COLS} h-[50px] items-center bg-[#363941] text-[14.5px] font-bold text-white`}>
              {HEADERS.map((h) => (
                <div key={h} className="pl-4"><span className="inline-block origin-left scale-x-[1.3] whitespace-nowrap">{h}</span></div>
              ))}
            </div>
            {DATA.map((row, i) => (
              <div key={i} className={`${COLS} h-[47.6px] items-center text-[15px] text-[#454a50] ${i ? "border-t border-[#e3e5e9]" : ""}`}>
                <div className="pl-[15.5px] font-bold text-[#212529]"><span className="inline-block origin-left scale-x-[1.2]">{YEARS[i]}</span></div>
                {row.map((v, j) => (
                  <div key={j} className="pl-4"><span className="inline-block origin-left scale-x-[1.14]">{v}</span></div>
                ))}
              </div>
            ))}
          </section>
        </main>
      </div>
      <div className="flex w-[11px] flex-col justify-between overflow-hidden bg-[#f1f1f1] pl-[2px]">
        <svg className="h-[13px] w-[9px] shrink-0" viewBox="0 0 9 13"><path d="M4 7 L9 2.5 V7 Z" fill="#8b8b8b" /></svg>
        <div className="h-[1041px] bg-[#c1c1c1]" />
        <svg className="h-[32px] w-[9px] shrink-0" viewBox="0 0 9 32"><path d="M4 29 H9 V32 H7 Z" fill="#505050" /></svg>
      </div>
    </div>
  );
}
